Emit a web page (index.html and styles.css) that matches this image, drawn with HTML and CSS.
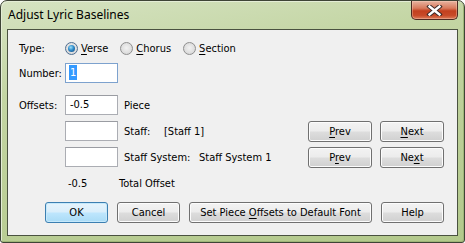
FILE: index.html
```html
<!DOCTYPE html>
<html>
<head>
    <meta http-equiv="Content-Type" content="text/html; charset=utf-8">
    <title>Adjust Lyric Baselines</title>
    <link rel="stylesheet" href="styles.css">
</head>
<body>
    <div class="window">
        <!-- 标题栏 -->
        <div class="titlebar">
            <span class="title">Adjust Lyric Baselines</span>
            <span class="close">
                <svg width="17" height="11" viewBox="0 0 17 11">
                    <path d="M3.5 1.5 L13.5 9.5 M13.5 1.5 L3.5 9.5" stroke="#3b2a28" stroke-width="4.4" stroke-linecap="square" fill="none"/>
                    <path d="M3.5 1.5 L13.5 9.5 M13.5 1.5 L3.5 9.5" stroke="#fff" stroke-width="2.4" stroke-linecap="square" fill="none"/>
                </svg>
            </span>
        </div>
        <div class="client">
            <!-- 类型 -->
            <div class="row typeRow">
                <span class="label">Type:</span>
                <span class="opt"><span class="radio on"></span><span><u>V</u>erse</span></span>
                <span class="opt"><span class="radio"></span><span><u>C</u>horus</span></span>
                <span class="opt"><span class="radio"></span><span><u>S</u>ection</span></span>
            </div>
            <div class="row numRow">
                <span class="label">Number:</span>
                <span class="field focus"><span class="sel">1</span></span>
            </div>
            <!-- 偏移 -->
            <div class="row offRow">
                <span class="label">Offsets:</span>
                <span class="field">-0.5</span>
                <span class="text">Piece</span>
            </div>
            <div class="row subRow">
                <span class="label"></span>
                <span class="field"></span>
                <span class="text key">Staff:</span>
                <span class="text">[Staff 1]</span>
                <span class="nav">
                    <span class="btn"><u>P</u>rev</span>
                    <span class="btn"><u>N</u>ext</span>
                </span>
            </div>
            <div class="row subRow">
                <span class="label"></span>
                <span class="field"></span>
                <span class="text key wide">Staff System:</span>
                <span class="text">Staff System 1</span>
                <span class="nav">
                    <span class="btn">P<u>r</u>ev</span>
                    <span class="btn">Ne<u>x</u>t</span>
                </span>
            </div>
            <div class="row totalRow">
                <span class="total">-0.5</span>
                <span class="text">Total Offset</span>
            </div>
            <!-- 按钮 -->
            <div class="actions">
                <span class="btn def">OK</span>
                <span class="btn">Cancel</span>
                <span class="btn long">Set Piece <u>O</u>ffsets to Default Font</span>
                <span class="btn">Help</span>
            </div>
        </div>
    </div>
</body>
</html>
```

FILE: styles.css
```css
body,div,span,u{margin:0;padding:0;border:0;}
body{font-size:11px; font-family:"DejaVu Sans Condensed","Liberation Sans",sans-serif; color:#000; background:#fff;}
u{text-decoration:underline; text-underline-offset:2px;}

.window{ width:465px; height:243px; box-sizing:border-box; border:1px solid #3e4436; border-radius:7px 7px 3px 3px;
    padding:0 6px 6px 6px; display:flex; flex-direction:column;
    background:linear-gradient(170deg,#d6e3c2 0%,#c3d5a3 30%,#bccf98 60%,#b3c98c 100%);
    box-shadow:inset 1px 1px 0 #e4edd6, inset -1px -1px 0 #9fb678;}

.titlebar{ height:28px; display:flex; align-items:flex-start;}
.title{ font-family:"Noto Sans","Open Sans",sans-serif; font-size:12px; line-height:16px; padding:6px 0 0 1px; color:#000;}
.close{ margin-left:auto; width:47px; height:19px; box-sizing:border-box; border:1px solid #4c2a22; border-top:0;
    border-radius:0 0 5px 5px; display:flex; align-items:center; justify-content:center;
    background:linear-gradient(#e7b3a0 0%,#d87a5c 40%,#c2401f 55%,#c84a28 80%,#dc7c5a 100%);
    box-shadow:inset 0 0 0 1px rgba(255,220,200,0.35);}
.close svg{ display:block;}

.client{ flex:1; border:1px solid #4a5240; background:#f0f0f0; padding:8px 13px 0 11px;}

.row{ display:flex; align-items:center; height:20px;}
.label{ width:46px; flex:none;}
.numRow{ margin-top:5px;}
.offRow{ margin-top:12px;}
.subRow{ margin-top:6px;}
.totalRow{ margin-top:6px;}

.opt{ display:flex; align-items:center; margin-right:12px;}
.radio{ width:13px; height:13px; box-sizing:border-box; border-radius:50%; border:1px solid #8f8f8f; margin-right:3px;
    background:radial-gradient(circle at 50% 45%,#f2f2f2 0%,#e0e0e0 55%,#cfcfcf 100%);
    display:flex; align-items:center; justify-content:center;}
.radio.on{ border-color:#4f6f92;}
.radio.on:after{ content:""; width:7px; height:7px; border-radius:50%;
    background:radial-gradient(circle at 40% 35%,#9fe0f8 0%,#2e8ccc 45%,#123f72 100%);}

.field{ width:53px; height:20px; box-sizing:border-box; border:1px solid #abadb3; border-top-color:#9a9ca2; background:#fff;
    padding:0 4px; line-height:18px; flex:none;}
.field.focus{ border-color:#7da2ce; padding-left:3px;}
.sel{ background:#3399ff; color:#fff; padding:1px 1px;}

.text{ margin-left:6px;}
.key{ width:34px;}
.key.wide{ width:69px;}

.nav{ margin-left:auto; display:flex; gap:8px;}
.btn{ display:block; width:64px; height:21px; box-sizing:border-box; text-align:center; line-height:19px; white-space:pre;
    border:1px solid #707070; border-radius:3px;
    background:linear-gradient(#f3f3f3 0%,#ececec 48%,#dddddd 52%,#d0d0d0 100%);
    box-shadow:inset 0 0 0 1px #fcfcfc;}
.btn.def{ border-color:#3c7fb1; background:linear-gradient(#e6f4fc 0%,#d9eefb 48%,#bee6fd 52%,#a9dbf6 100%);
    box-shadow:inset 0 0 0 1px #c6e9fb;}

.total{ width:51px; padding-left:49px;}
.totalRow .text{ margin-left:0;}

.actions{ display:flex; justify-content:flex-end; gap:9px; margin-top:9px;}
.actions .btn{ width:63px;}
.actions .btn.long{ width:183px;}
```
